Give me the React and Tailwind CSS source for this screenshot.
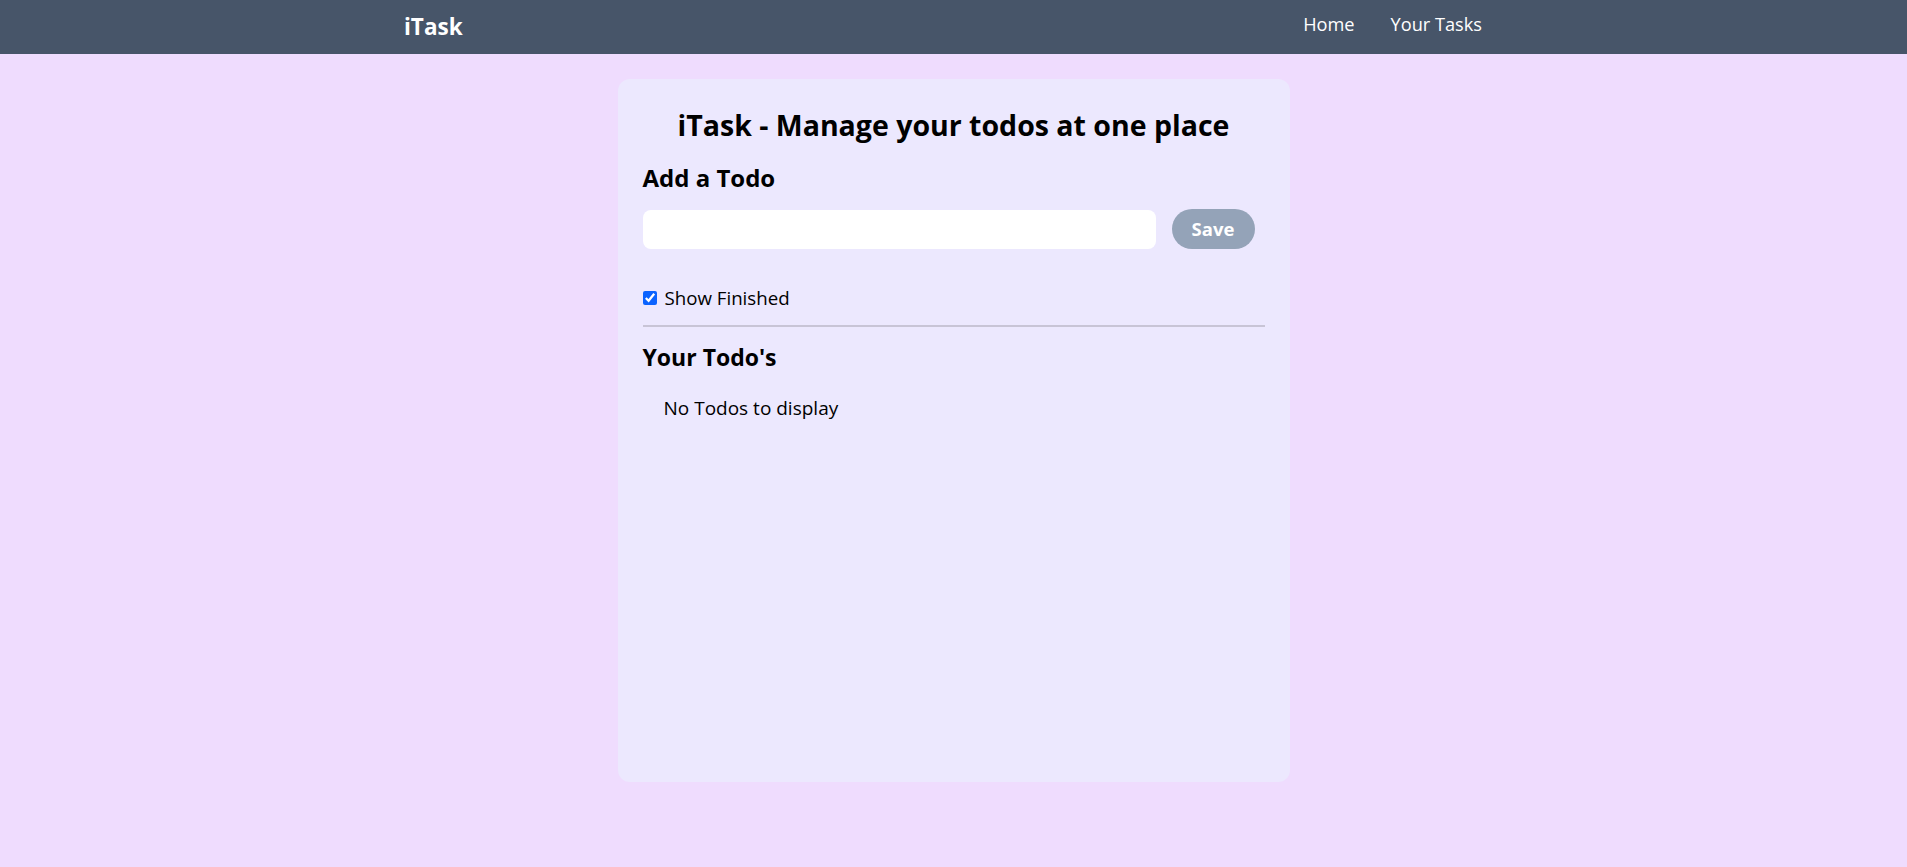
export default function App() {
  return (
    <div className="min-h-[867px] bg-[#efdcfe] font-['Open_Sans',sans-serif]">
      <nav className="flex h-[54px] items-center justify-between bg-[#475569] pl-[404px] pr-[425px] text-white">
        <div className="text-[22.5px] font-bold leading-none">iTask</div>
        <ul className="flex gap-[36px] text-[18.2px] leading-none -mt-[6px]">
          <li>Home</li>
          <li>Your Tasks</li>
        </ul>
      </nav>
      <main className="mx-auto mt-[25px] flex h-[703px] w-[672px] flex-col rounded-xl bg-[#ece8fe] px-[25px] pt-[24px] text-black">
        <h1 className="h-[44px] text-center text-[28.5px] font-bold leading-[44px]">
          iTask - Manage your todos at one place
        </h1>
        <h2 className="mt-[15px] h-[32px] text-[24px] font-bold leading-[32px]">Add a Todo</h2>
        <div className="mt-[15px] flex h-[40px] items-center gap-[16px]">
          <input type="text" className="h-[39px] w-[513px] rounded-lg bg-white px-3 outline-none" />
          <button className="h-[40px] w-[83px] rounded-full bg-[#94a3b8] text-[18.5px] font-bold text-white">
            Save
          </button>
        </div>
        <label className="mt-[37px] flex h-[24px] items-center gap-[8px] text-[18.7px] leading-[24px]">
          <input type="checkbox" defaultChecked className="m-0 h-[14px] w-[14px] accent-[#0b63ff]" />
          <span>Show Finished</span>
        </label>
        <div className="mt-[15px] h-[2px] w-[622px] bg-[#c8c4d6]" />
        <h2 className="mt-[14px] h-[32px] text-[23px] font-bold leading-[32px]">Your Todo&apos;s</h2>
        <div className="mt-[23px] pl-[21px] text-[19px] leading-[24px]">No Todos to display</div>
      </main>
    </div>
  );
}
